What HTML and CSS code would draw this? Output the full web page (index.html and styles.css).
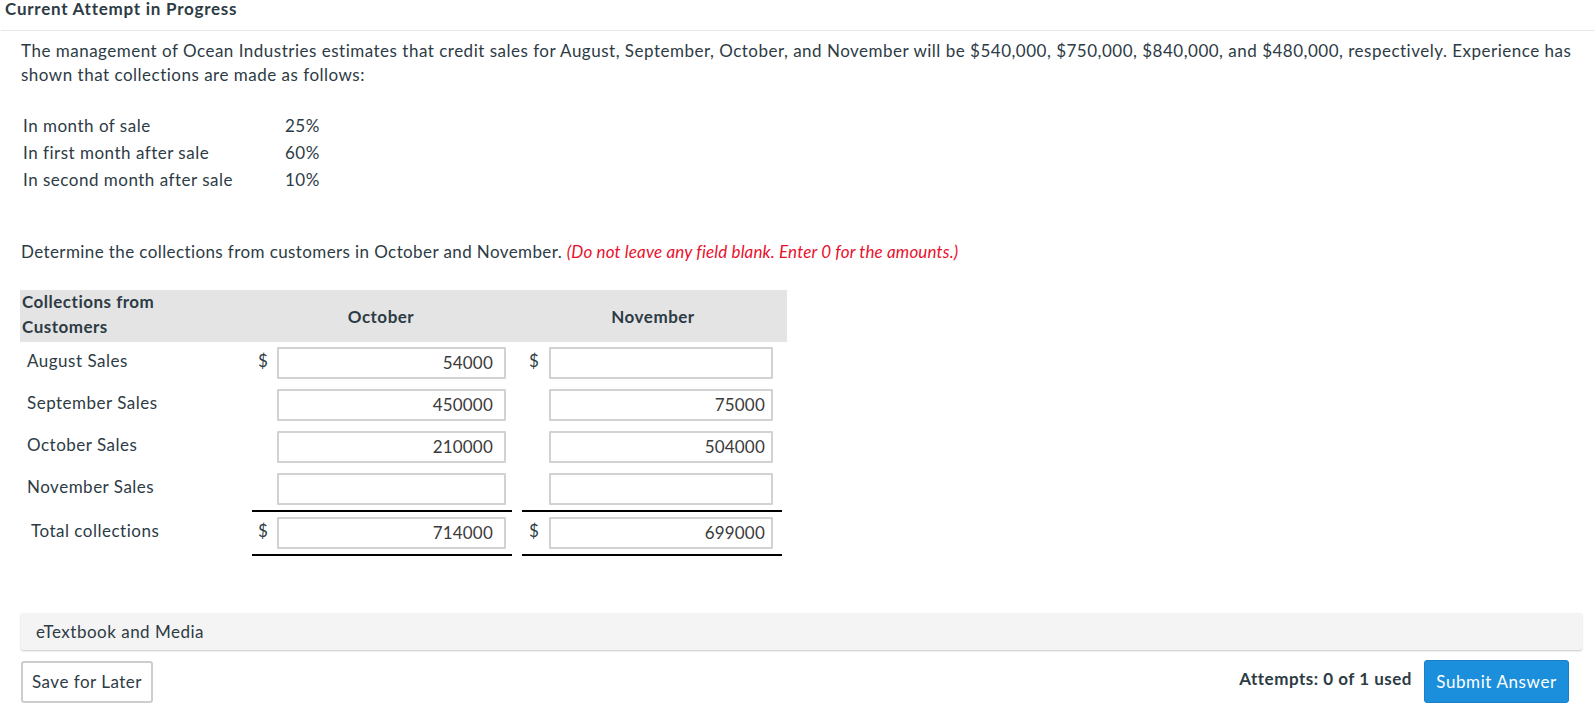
FILE: index.html
```html
<!DOCTYPE html>
<html>
<head>
<meta charset="utf-8">
<link rel="stylesheet" href="styles.css">
</head>
<body>
<div class="page">
  <div class="attempt-title">Current Attempt in Progress</div>
  <div class="content">
    <p class="intro">The management of Ocean Industries estimates that credit sales for August, September, October, and November will be $540,000, $750,000, $840,000, and $480,000, respectively. Experience has shown that collections are made as follows:</p>
    <div class="rates">
      <div class="rate-row"><span class="rate-label">In month of sale</span><span class="rate-val">25%</span></div>
      <div class="rate-row"><span class="rate-label">In first month after sale</span><span class="rate-val">60%</span></div>
      <div class="rate-row"><span class="rate-label">In second month after sale</span><span class="rate-val">10%</span></div>
    </div>
    <p class="question">Determine the collections from customers in October and November. <em class="note">(Do not leave any field blank. Enter 0 for the amounts.)</em></p>

    <div class="sheet">
      <div class="sheet-head">
        <div class="h-label">Collections from Customers</div>
        <div class="h-oct">October</div>
        <div></div>
        <div class="h-nov">November</div>
      </div>
      <div class="sheet-body">
        <div class="r-label">August Sales</div>
        <div class="cell oct"><span class="cur">$</span><div class="field">54000</div></div>
        <div></div>
        <div class="cell nov"><span class="cur">$</span><div class="field"></div></div>

        <div class="r-label">September Sales</div>
        <div class="cell oct"><span class="cur"></span><div class="field">450000</div></div>
        <div></div>
        <div class="cell nov"><span class="cur"></span><div class="field">75000</div></div>

        <div class="r-label">October Sales</div>
        <div class="cell oct"><span class="cur"></span><div class="field">210000</div></div>
        <div></div>
        <div class="cell nov"><span class="cur"></span><div class="field">504000</div></div>

        <div class="r-label">November Sales</div>
        <div class="cell oct"><span class="cur"></span><div class="field"></div></div>
        <div></div>
        <div class="cell nov"><span class="cur"></span><div class="field"></div></div>

        <div class="r-label total-label">Total collections</div>
        <div class="cell oct total"><span class="cur">$</span><div class="field">714000</div></div>
        <div></div>
        <div class="cell nov total"><span class="cur">$</span><div class="field">699000</div></div>
      </div>
    </div>

    <div class="media-bar">eTextbook and Media</div>

    <div class="footer">
      <button class="btn-save">Save for Later</button>
      <div class="submit-group">
        <span class="attempts">Attempts: 0 of 1 used</span>
        <button class="btn-submit">Submit Answer</button>
      </div>
    </div>
  </div>
</div>
</body>
</html>
```

FILE: styles.css
```css
* { box-sizing: border-box; }
body {
  margin: 0;
  font-family: Lato, "Open Sans", sans-serif;
  font-size: 17px;
  letter-spacing: 0.5px;
  color: #2d3b45;
  background: #fff;
}
.page { width: 1594px; }
.attempt-title {
  font-weight: 700;
  letter-spacing: 0.75px;
  line-height: 18px;
  padding: 0 0 12px 4px;
  margin-left: 1px;
  border-bottom: 1px solid #e6e6e6;
}
.content {
  padding: 0 12px 0 21px;
}
.intro {
  margin: 8px 0 0;
  line-height: 24px;
}
.rates {
  margin-top: 25px;
  padding-left: 2px;
}
.rate-row {
  display: flex;
  line-height: 27px;
  height: 27px;
}
.rate-label { width: 262px; }
.question {
  margin: 47px 0 0;
  line-height: 24px;
  letter-spacing: 0.4px;
}
.note {
  color: #e8112d;
  font-style: italic;
  letter-spacing: 0.15px;
}
.sheet {
  margin-top: 26px;
  margin-left: -1px;
}
.sheet-head {
  display: grid;
  grid-template-columns: 232px 258px 9px 268px;
  width: 767px;
  height: 52px;
  background: #e4e4e4;
  font-weight: 700;
  align-items: center;
}
.h-label {
  line-height: 25px;
  margin-top: -1px;
  padding-left: 2px;
  max-width: 175px;
  align-self: start;
}
.h-oct, .h-nov { text-align: center; }
.sheet-body {
  display: grid;
  grid-template-columns: 232px 260px 10px 260px;
}
.r-label {
  display: flex;
  align-items: center;
  padding: 0 0 6px 7px;
  height: 42px;
}
.total-label {
  padding-left: 11px;
  height: 46px;
}
.cell {
  display: flex;
  align-items: flex-start;
  padding: 5px 0;
  height: 42px;
}
.cell.oct { padding-left: 6px; }
.cell.nov { padding-left: 7px; }
.cur {
  width: 19px;
  line-height: 28px;
  letter-spacing: 0;
}
.cell.nov .cur { width: 20px; }
.field {
  height: 32px;
  border: 2px solid #d2d2d2;
  border-radius: 1px;
  text-align: right;
  line-height: 28px;
  letter-spacing: 0.2px;
  color: #3b3b3b;
}
.cell.oct .field { width: 229px; padding-right: 11px; }
.cell.nov .field { width: 224px; padding-right: 6px; }
.cell.total {
  height: 46px;
  border-top: 2px solid #000;
  border-bottom: 2px solid #000;
}
.media-bar {
  margin-top: 57px;
  height: 37px;
  line-height: 37px;
  padding-left: 15px;
  background: #f4f4f4;
  box-shadow: 0 1px 2px rgba(0,0,0,0.22);
  border-radius: 2px;
}
.footer {
  display: flex;
  justify-content: space-between;
  align-items: center;
  margin-top: 10px;
  margin-right: 13px;
}
.btn-save {
  font-family: inherit;
  font-size: 17px;
  letter-spacing: 0.5px;
  color: #2d3b45;
  background: #fff;
  border: 2px solid #cdcdcd;
  border-radius: 3px;
  height: 42px;
  width: 132px;
  padding: 0;
}
.submit-group {
  display: flex;
  align-items: center;
  gap: 12px;
}
.attempts {
  font-weight: 700;
  margin-top: -6px;
}
.btn-submit {
  font-family: inherit;
  font-size: 17px;
  letter-spacing: 0.6px;
  color: #fff;
  background: #1b8fdc;
  border: 1px solid #1780c8;
  border-radius: 3px;
  height: 43px;
  width: 145px;
  padding: 0;
}
```
